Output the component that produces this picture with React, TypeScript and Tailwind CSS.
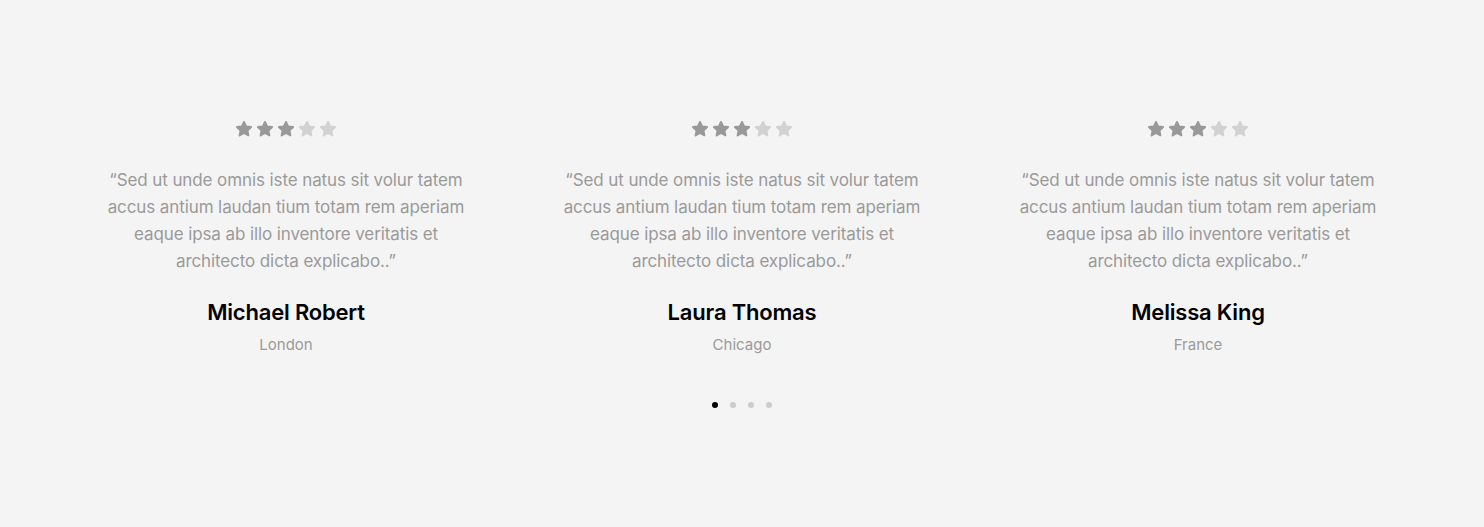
const testimonials = [
  { name: "Michael Robert", place: "London" },
  { name: "Laura Thomas", place: "Chicago" },
  { name: "Melissa King", place: "France" },
];

const lines = [
  "\u201CSed ut unde omnis iste natus sit volur tatem",
  "accus antium laudan tium totam rem aperiam",
  "eaque ipsa ab illo inventore veritatis et",
  "architecto dicta explicabo..\u201D",
];

const Star = ({ filled }: { filled: boolean }) => (
  <svg width="18" height="18" viewBox="0 0 24 24" className={filled ? "text-[#999999]" : "text-[#d2d2d2]"}>
    <path
      fill="currentColor"
      stroke="currentColor"
      strokeWidth="2.5"
      strokeLinejoin="round"
      d="M12 2.5l2.9 6.1 6.6.8-4.9 4.6 1.3 6.6L12 17.3l-5.9 3.3 1.3-6.6-4.9-4.6 6.6-.8z"
    />
  </svg>
);

const App = () => {
  return (
    <div className="w-full h-[527px] bg-[#f4f4f4] font-['Inter',sans-serif]">
      <div className="mx-auto w-[1368px] pt-[120px] grid grid-cols-3">
        {testimonials.map((t, i) => (
          <div key={i} className="flex flex-col items-center text-center">
            <div className="flex gap-[3px]">
              {[0, 1, 2, 3, 4].map((s) => (
                <Star key={s} filled={s < 3} />
              ))}
            </div>
            <p className="mt-[29px] text-[17px] leading-[27px] text-[#9a9a9a] tracking-[-0.1px]">
              {lines.map((l, k) => (
                <span key={k} className="block whitespace-nowrap">
                  {l}
                </span>
              ))}
            </p>
            <h3 className="mt-[24px] text-[22px] leading-[26px] font-semibold text-black tracking-[-0.2px]">
              {t.name}
            </h3>
            <p className="mt-[10px] text-[15px] leading-[20px] text-[#9a9a9a]">{t.place}</p>
          </div>
        ))}
      </div>
      <div className="flex justify-center gap-[12px] mt-[47px]">
        {[0, 1, 2, 3].map((d) => (
          <span
            key={d}
            className={d === 0 ? "w-[6px] h-[6px] rounded-full bg-black" : "w-[6px] h-[6px] rounded-full bg-[#cccccc]"}
          />
        ))}
      </div>
    </div>
  );
};

export default App;
